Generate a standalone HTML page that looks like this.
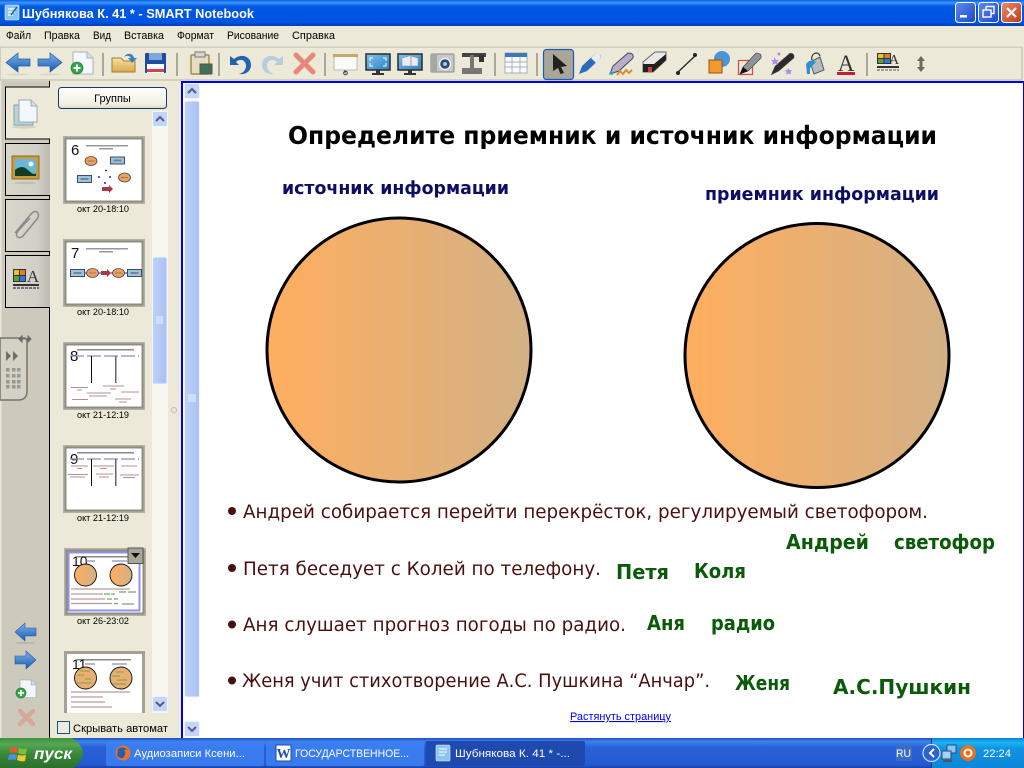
<!DOCTYPE html>
<html><head><meta charset="utf-8"><title>SMART Notebook</title>
<style>
html,body{margin:0;padding:0;width:1024px;height:768px;overflow:hidden;background:#ece9d8}
svg{display:block;position:absolute;left:0;top:0}
.ui{font-family:"Liberation Sans",sans-serif;font-size:11px;fill:#000}
.sl{font-family:"DejaVu Sans",sans-serif}
.dg{font-family:"Liberation Sans",sans-serif;font-size:15px;fill:#111}
.lab{font-family:"Liberation Sans",sans-serif;font-size:9.5px;fill:#000;text-anchor:middle}
.g{fill:#0a5a0a;font-weight:bold;font-size:20px}
.b{fill:#4a1010;font-size:18.5px}
.n{fill:#0d0d66;font-weight:bold;font-size:18px}
</style></head><body>
<svg width="1024" height="768" viewBox="0 0 1024 768" xmlns="http://www.w3.org/2000/svg">
<defs>
<linearGradient id="tb" x1="0" y1="0" x2="0" y2="1"><stop offset="0" stop-color="#0a5ee6"/><stop offset=".1" stop-color="#3d95ff"/><stop offset=".25" stop-color="#0058e0"/><stop offset=".85" stop-color="#0054e3"/><stop offset="1" stop-color="#003fb5"/></linearGradient>
<linearGradient id="orb" x1="0" y1="0" x2="1" y2="0"><stop offset="0" stop-color="#ffae5e"/><stop offset="1" stop-color="#d3b186"/></linearGradient>
<linearGradient id="task" x1="0" y1="0" x2="0" y2="1"><stop offset="0" stop-color="#1f4fc4"/><stop offset=".12" stop-color="#3f83ea"/><stop offset=".3" stop-color="#2a62d8"/><stop offset=".9" stop-color="#2459d2"/><stop offset="1" stop-color="#1941a5"/></linearGradient>
<linearGradient id="tray" x1="0" y1="0" x2="0" y2="1"><stop offset="0" stop-color="#0f7fd8"/><stop offset=".15" stop-color="#19b5f0"/><stop offset=".35" stop-color="#0f93e4"/><stop offset="1" stop-color="#0e86da"/></linearGradient>
<linearGradient id="start" x1="0" y1="0" x2="0" y2="1"><stop offset="0" stop-color="#3f8f3f"/><stop offset=".2" stop-color="#55a855"/><stop offset=".5" stop-color="#398a39"/><stop offset="1" stop-color="#2c6f2c"/></linearGradient>
<linearGradient id="scr" x1="0" y1="0" x2="1" y2="0"><stop offset="0" stop-color="#bed1f8"/><stop offset="1" stop-color="#a9c0f2"/></linearGradient>
<linearGradient id="tabg" x1="0" y1="0" x2="1" y2="0"><stop offset="0" stop-color="#d9d7cc"/><stop offset=".7" stop-color="#d2d0c6"/><stop offset="1" stop-color="#bdbbb2"/></linearGradient>
<linearGradient id="btn" x1="0" y1="0" x2="0" y2="1"><stop offset="0" stop-color="#fff"/><stop offset=".8" stop-color="#f0eee2"/><stop offset="1" stop-color="#dcd8c4"/></linearGradient>
<linearGradient id="blA" x1="0" y1="0" x2="0" y2="1"><stop offset="0" stop-color="#7fb2e8"/><stop offset="1" stop-color="#1a5cb0"/></linearGradient>
<linearGradient id="winb" x1="0" y1="0" x2="1" y2="1"><stop offset="0" stop-color="#5c8cf0"/><stop offset="1" stop-color="#1c46c8"/></linearGradient>
<linearGradient id="winr" x1="0" y1="0" x2="1" y2="1"><stop offset="0" stop-color="#e88a6c"/><stop offset="1" stop-color="#c23a18"/></linearGradient>
<linearGradient id="fold" x1="0" y1="0" x2="0" y2="1"><stop offset="0" stop-color="#f8e0a0"/><stop offset="1" stop-color="#d8a850"/></linearGradient>
<linearGradient id="mon" x1="0" y1="0" x2="1" y2="1"><stop offset="0" stop-color="#7fc4ee"/><stop offset="1" stop-color="#2a80c0"/></linearGradient>
<g id="arrR"><path d="M0 6 H12 V0 L24 9.500 L12 19 V13 H0 Z" fill="url(#blA)" stroke="#1f5aa8" stroke-width=".7"/><ellipse cx="12" cy="21.500" rx="11" ry="1" fill="#dbd8c9"/></g>
<g id="scUp"><rect width="15" height="15" rx="1.500" fill="#c5d6fa" stroke="#f2f5fe"/><path d="M3.500 9.500 L7.500 5.500 L11.500 9.500" fill="none" stroke="#4d6185" stroke-width="2"/></g>
<g id="scDn"><rect width="15" height="15" rx="1.500" fill="#c5d6fa" stroke="#f2f5fe"/><path d="M3.500 5.500 L7.500 9.500 L11.500 5.500" fill="none" stroke="#4d6185" stroke-width="2"/></g>
<g id="sep"><rect width="2" height="23" fill="#aaa89c"/></g>
<g id="page"><path d="M0 0 H14 L20 6 V22 H0Z" fill="#f4f8fd" stroke="#a6b4bf"/><path d="M14 0 V6 H20" fill="#d6dfe8" stroke="#a6b4bf"/></g>
<g id="plus"><circle r="6" fill="#33a64a" stroke="#17752c" stroke-width=".6"/><path d="M-3.500 0 H3.500 M0 -3.500 V3.500" stroke="#fff" stroke-width="2"/></g>
<g id="thX"><path d="M2 2 L19 19 M19 2 L2 19" stroke="#e88878" stroke-width="5" stroke-linecap="round"/></g>
<g id="fr"><rect width="82" height="68" fill="#b4b2a6"/><rect x="1.500" y="1.500" width="79" height="65" fill="#8f8d82"/><rect x="3.500" y="3.500" width="75" height="61" fill="#fff"/></g>
<g id="ob"><rect width="14" height="7" fill="#9cc4d8" stroke="#3c4c64"/><rect x="3" y="2.500" width="8" height="2" fill="#6f86a4"/></g>
<g id="oc"><ellipse rx="6" ry="4.500" fill="#ec9f5e" stroke="#444" stroke-width=".8"/><rect x="-3.500" y="-.5" width="7" height="1" fill="#9c7a5c"/></g>
</defs>

<rect width="1024" height="768" fill="#ece9d8"/>
<!-- title bar -->
<rect width="1024" height="26" fill="url(#tb)"/>
<rect x="5" y="5" width="14" height="15" rx="1.500" fill="#8fc4ea" stroke="#e4f2fb" stroke-width=".6"/>
<path d="M8 9 H15 M8 12 H15 M8 15 H13" stroke="#fff" stroke-width="1.200"/><path d="M11 15 L17 7" stroke="#1a5fa8" stroke-width="1.500"/>
<text x="22" y="18" class="ui" style="font-size:13px;font-weight:bold;fill:#fff" textLength="232" lengthAdjust="spacingAndGlyphs">Шубнякова К. 41 * - SMART Notebook</text>
<rect x="955.500" y="2.500" width="20" height="20" rx="3" fill="url(#winb)" stroke="#fff"/><rect x="960" y="15" width="7" height="2.500" fill="#fff"/>
<rect x="978.500" y="2.500" width="20" height="20" rx="3" fill="url(#winb)" stroke="#fff"/>
<path d="M986 6.500 h8 v7 h-2.500 M986 6.500 v3" fill="none" stroke="#fff" stroke-width="1.400"/><rect x="983" y="10" width="8" height="7" fill="none" stroke="#fff" stroke-width="1.400"/>
<rect x="1001.500" y="2.500" width="20" height="20" rx="3" fill="url(#winr)" stroke="#fff"/><path d="M1007 8 L1016 17 M1016 8 L1007 17" stroke="#fff" stroke-width="2.200"/>

<!-- menu -->
<g class="ui">
<text x="6" y="39" textLength="25" lengthAdjust="spacingAndGlyphs">Файл</text>
<text x="44" y="39" textLength="36" lengthAdjust="spacingAndGlyphs">Правка</text>
<text x="93" y="39" textLength="18" lengthAdjust="spacingAndGlyphs">Вид</text>
<text x="124" y="39" textLength="40" lengthAdjust="spacingAndGlyphs">Вставка</text>
<text x="177" y="39" textLength="37" lengthAdjust="spacingAndGlyphs">Формат</text>
<text x="227" y="39" textLength="52" lengthAdjust="spacingAndGlyphs">Рисование</text>
<text x="292" y="39" textLength="43" lengthAdjust="spacingAndGlyphs">Справка</text>
</g>
<!-- toolbar -->
<rect x="0" y="46" width="1023" height="1" fill="#fff"/>
<rect x="0" y="47" width="1022" height="33" fill="#ece9d8" stroke="#b8b6a8"/>
<use href="#arrR" transform="translate(30,53) scale(-1,1)"/>
<use href="#arrR" transform="translate(38,53)"/>
<use href="#page" transform="translate(73,52)"/><use href="#plus" transform="translate(77,68)"/>
<use href="#sep" transform="translate(102,53)"/>
<path d="M112 58 H121 L124 61 H135 V72 H112Z" fill="url(#fold)" stroke="#a67c2c"/><path d="M124 57 C127 52 133 53 134 58 L137 58 L132 63 L128 58 H131 C130 56 127 55 124 57Z" fill="#3a7fc0"/>
<rect x="145" y="53" width="21" height="20" rx="1" fill="#1f4f9c"/><rect x="149" y="53" width="13" height="7" fill="#7ca8da"/><rect x="147" y="64" width="17" height="9" fill="#fff"/><rect x="147" y="69" width="17" height="3" fill="#d8404a"/>
<use href="#sep" transform="translate(176,53)"/>
<rect x="191" y="55" width="18" height="19" rx="1" fill="#e8dcc0" stroke="#a88a50" stroke-width="1.500"/><rect x="195" y="52" width="10" height="5" fill="#d8d8d0" stroke="#777"/><rect x="200" y="64" width="12" height="10" fill="#3f6f58" stroke="#555"/>
<use href="#sep" transform="translate(218,53)"/>
<path d="M230 56 V65 H239 L236 62 C240 58 246 60 246 66 C246 70 243 73 239 74 C246 75 251 71 251 65 C251 56 241 53 234 59 Z" fill="#2264b0"/>
<path d="M283 56 V65 H274 L277 62 C273 58 267 60 267 66 C267 70 270 73 274 74 C267 75 262 71 262 65 C262 56 272 53 279 59 Z" fill="#b6cfe0"/>
<use href="#thX" transform="translate(294,53)"/>
<use href="#sep" transform="translate(324,53)"/>
<rect x="334" y="55" width="23" height="15" fill="#fafaf6" stroke="#bbb"/><rect x="333" y="54" width="25" height="3" fill="#c8a868"/><path d="M345 70 V73" stroke="#555"/><circle cx="345.500" cy="73" r="1.800" fill="none" stroke="#333"/>
<rect x="366" y="54" width="24" height="16" fill="url(#mon)" stroke="#2a2a2a" stroke-width="1.500"/><path d="M376 70 h4 v3 h4 v2 h-12 v-2 h4z" fill="#333"/><path d="M370 61 V58 H373 M383 58 H386 V61 M370 63 V66 H373 M386 63 V66 H383" fill="none" stroke="#fff"/>
<rect x="398" y="54" width="24" height="16" fill="url(#mon)" stroke="#2a2a2a" stroke-width="1.500"/><path d="M408 70 h4 v3 h4 v2 h-12 v-2 h4z" fill="#333"/><path d="M402 66 V58 L409 56 H411 V66Z M418 66 V58 L411 56 V66Z" fill="#e8eef4" stroke="#888" stroke-width=".5"/>
<rect x="431" y="54" width="23" height="18" rx="1" fill="#c8c8c8" stroke="#888"/><rect x="431" y="54" width="6" height="18" fill="#a6a6a6"/><circle cx="445" cy="64" r="5.500" fill="#2c4a70" stroke="#eee" stroke-width="1.500"/><circle cx="445" cy="64" r="2" fill="#9ccbe8"/>
<rect x="462" y="53" width="24" height="4" fill="#444"/><rect x="470" y="55" width="4" height="13" fill="#777"/><rect x="479" y="55" width="5" height="7" fill="#333"/><rect x="462" y="68" width="20" height="6" fill="#777"/>
<use href="#sep" transform="translate(494,53)"/>
<rect x="505" y="53" width="22" height="20" fill="#fafbfd" stroke="#a8b0b8"/><rect x="505" y="53" width="22" height="4" fill="#3a78b8"/><path d="M505 62 H527 M505 67 H527 M512 57 V73 M520 57 V73" stroke="#a8b0b8"/>
<use href="#sep" transform="translate(536,53)"/>
<rect x="543.500" y="49.500" width="30" height="30" rx="3" fill="#a9a698" stroke="#1a5ab8" stroke-width="1.200"/>
<path d="M553 54 L567 66 L561 67 L564 73 L560.500 74 L558 68 L553 71Z" fill="#222"/>
<path d="M579 74 L582 66 L596 53 Q601 53 601 58 L587 71Z" fill="#2b6cb8"/><path d="M591 58 L596 63 L601 58 Q600 52 596 53Z" fill="#e6ecf2"/>
<path d="M610 74 L613 66 L628 53 Q634 53 633 58 L619 71Z" fill="#b8aecc" stroke="#3c4a58"/><path d="M617 75 l3 -4 3 3 3 -4 3 3 3 -3" fill="none" stroke="#d89030" stroke-width="2"/><path d="M610 72 l3 2" stroke="#2b9cc0" stroke-width="3"/>
<path d="M643 62 L655 52 H666 V60 L653 72 H643Z" fill="#e8e8e8" stroke="#666"/><path d="M643 64 H654 L666 54 V60 L653 72 H643Z" fill="#222"/><rect x="648" y="67" width="4" height="5" fill="#c84040"/>
<path d="M677 73 L696 55" stroke="#222" stroke-width="1.300"/><circle cx="695" cy="55" r="2" fill="#222"/><circle cx="678" cy="73" r="2" fill="#222"/>
<circle cx="722" cy="59" r="8" fill="#4c94d8"/><rect x="709" y="60" width="13" height="13" fill="#f49a2c" stroke="#99501a"/>
<rect x="738.500" y="60.500" width="14" height="14" fill="none" stroke="#d04848" stroke-width="1.200"/><path d="M740 74 L743 67 L756 53 Q762 53 761 58 L748 71Z" fill="#8f949a" stroke="#333" stroke-width=".6"/><path d="M740 74 L743 67 L748 71Z" fill="#111"/>
<path d="M771 75 L775 66 L790 53 Q795 53 794 58 L779 71Z" fill="#2c2c2c" stroke="#777" stroke-width=".5"/><path d="M774 57 l2 3 3 0 -2 2 1 3 -3-1.500 -3 1.500 1-3 -2-2 3 0Z" fill="#b08ae8"/><path d="M788 68 l1.500 2 2.500 0 -1.500 2 .5 2.500 -2.500-1 -2.500 1 .5-2.500 -1.500-2 2.500 0Z" fill="#b08ae8"/><circle cx="779" cy="54" r="1.500" fill="#b08ae8"/>
<path d="M810 62 L820 57 L824 70 L814 74Z" fill="#b8bcc0" stroke="#555"/><path d="M812 60 C810 54 818 50 820 56" fill="none" stroke="#333" stroke-width="1.200"/><path d="M806 64 Q811 58 816 62 L810 68 V74 H807Z" fill="#2c8ed8"/>
<text x="846" y="71" text-anchor="middle" style="font-family:'Liberation Serif',serif;font-size:23px;fill:#333">A</text><rect x="837" y="72" width="18" height="3" fill="#c02030"/>
<use href="#sep" transform="translate(866,53)"/>
<rect x="877" y="53" width="14" height="11" fill="#333"/><rect x="878" y="54" width="5.500" height="4" fill="#e8c030"/><rect x="884.500" y="54" width="5.500" height="4" fill="#e87c20"/><rect x="878" y="59" width="5.500" height="4" fill="#58a040"/><rect x="884.500" y="59" width="5.500" height="4" fill="#2a7cd0"/>
<text x="894" y="64" text-anchor="middle" style="font-family:'Liberation Serif',serif;font-size:14px;fill:#333">A</text>
<rect x="877" y="66" width="22" height="2" fill="#333"/><path d="M877 70 H899" stroke="#555" stroke-dasharray="3 1"/>
<path d="M921 56 L925 61 H922.500 V67 H925 L921 72 L917 67 H919.500 V61 H917Z" fill="#6c6c64"/>

<!-- left tab column -->
<rect x="0" y="81" width="49" height="657" fill="#cdcabb"/>
<rect x="0" y="81" width="1.500" height="657" fill="#e8e6da"/>
<rect x="49" y="81" width="1" height="6" fill="#000"/><rect x="49" y="139" width="1" height="599" fill="#000"/>
<path d="M50 87 H5.500 V139 H50" fill="#ece9d8" stroke="#000"/>
<path d="M50 143.500 H5.500 V195.500 H50" fill="url(#tabg)" stroke="#000"/>
<path d="M50 199.500 H5.500 V251.500 H50" fill="url(#tabg)" stroke="#000"/>
<path d="M50 255.500 H5.500 V307.500 H50" fill="url(#tabg)" stroke="#000"/>
<rect x="14" y="105" width="19" height="20" fill="#b8d4d8" stroke="#8aa4a8"/><path d="M19 100 H31 L37 106 V122 H19Z" fill="#f2f7fb" stroke="#9aa8b0"/><path d="M31 100 V106 H37" fill="#d4dee6" stroke="#9aa8b0"/><ellipse cx="24" cy="127" rx="12" ry="1.500" fill="#d4d2c4"/>
<rect x="12" y="156" width="27" height="23" fill="#c89c3c" stroke="#8c6c20"/><rect x="15" y="159" width="21" height="17" fill="#6cb4d8"/><path d="M15 170 Q22 164 28 170 T36 173 V176 H15Z" fill="#123c24"/><circle cx="31" cy="164" r="2.500" fill="#e8f4f8"/><ellipse cx="25" cy="183" rx="11" ry="1.300" fill="#c0beb4"/>
<path d="M15 233 L31 214 C36 208 41 214 37 219 L23 236 C19 240 14 236 18 231 L30 218" fill="none" stroke="#8a8a84" stroke-width="1.500"/>
<rect x="13" y="269" width="13" height="13" fill="#333"/><rect x="14" y="270" width="5" height="5" fill="#e8c030"/><rect x="20" y="270" width="5" height="5" fill="#e87c20"/><rect x="14" y="276" width="5" height="5" fill="#58a040"/><rect x="20" y="276" width="5" height="5" fill="#2a7cd0"/>
<text x="33" y="282" text-anchor="middle" style="font-family:'Liberation Serif',serif;font-size:17px;fill:#333">A</text>
<rect x="13" y="284" width="26" height="2" fill="#333"/><path d="M13 288 H39" stroke="#555" stroke-dasharray="3 1" stroke-width="1.500"/>
<path d="M0 338 H24 Q27 338 27 341 V391 Q27 400 18 400 H0Z" fill="#d4d2c6" stroke="#77756c" stroke-width="1.500"/>
<path d="M6 351 L11 356 L6 361Z M13 351 L18 356 L13 361Z" fill="#6e6e66"/>
<g fill="#989890"><rect x="6" y="368" width="3.500" height="3.500"/><rect x="12" y="368" width="3.500" height="3.500"/><rect x="17" y="368" width="3.500" height="3.500"/><rect x="6" y="374" width="3.500" height="3.500"/><rect x="12" y="374" width="3.500" height="3.500"/><rect x="17" y="374" width="3.500" height="3.500"/><rect x="6" y="380" width="3.500" height="3.500"/><rect x="12" y="380" width="3.500" height="3.500"/><rect x="17" y="380" width="3.500" height="3.500"/><rect x="6" y="385" width="3.500" height="3.500"/><rect x="12" y="385" width="3.500" height="3.500"/><rect x="17" y="385" width="3.500" height="3.500"/></g>
<path d="M19 339 H31 M19 339 l3 -3 v6z M31 339 l-3 -3 v6z" stroke="#666" fill="#666"/>
<!-- bottom nav -->
<path d="M36 628 H25 V623 L15 632 L25 641 V636 H36Z" fill="url(#blA)" stroke="#1f5aa8" stroke-width=".6"/><ellipse cx="25" cy="643" rx="10" ry="1" fill="#b8b6a8"/>
<path d="M15 656 H26 V651 L36 660 L26 669 V664 H15Z" fill="url(#blA)" stroke="#1f5aa8" stroke-width=".6"/>
<use href="#page" transform="translate(20,680) scale(.8)"/><use href="#plus" transform="translate(21,693) scale(.85)"/>
<path d="M20 711 L33 724 M33 711 L20 724" stroke="#d6a898" stroke-width="4.500" stroke-linecap="round"/>

<!-- panel -->
<rect x="50" y="81" width="131" height="657" fill="#ece9d8"/>
<rect x="58.500" y="87.500" width="108" height="21" rx="3" fill="url(#btn)" stroke="#0f3c68"/>
<text x="112.500" y="102" class="ui" text-anchor="middle">Группы</text>
<rect x="152" y="111" width="16" height="602" fill="#f8f7f2"/>
<use href="#scUp" transform="translate(152.500,111.500)"/>
<rect x="152.500" y="257" width="14.500" height="127" rx="1.500" fill="url(#scr)" stroke="#f2f5fe"/>
<path d="M156 317 H163 M156 319 H163 M156 321 H163 M156 323 H163" stroke="#f0f4ff"/>
<use href="#scDn" transform="translate(152.500,696.500)"/>
<circle cx="174" cy="410" r="2.500" fill="none" stroke="#bbb"/>

<!-- thumbs -->
<use href="#fr" transform="translate(63,136)"/>
<text x="71" y="155" class="dg">6</text>
<rect x="86" y="145" width="42" height="1.500" fill="#999"/><rect x="99" y="148" width="14" height="1.500" fill="#999"/>
<use href="#oc" transform="translate(91,161)"/><use href="#ob" transform="translate(110.500,157)"/><use href="#ob" transform="translate(77.500,175.500)"/><use href="#oc" transform="translate(124.500,177.500)"/>
<path d="M105 170.500 h2 M98 177 h2 M109 177 h2 M104 183 h2" stroke="#2424e0" stroke-width="1.500"/><path d="M102 187 h7 v-2 l4 4 -4 4 v-2 h-7z" fill="#a83848"/>
<text x="103" y="212" class="lab" textLength="52" lengthAdjust="spacingAndGlyphs">окт 20-18:10</text>

<use href="#fr" transform="translate(63,239)"/>
<text x="71" y="258" class="dg">7</text>
<rect x="86" y="248" width="42" height="1.500" fill="#999"/><rect x="99" y="251" width="14" height="1.500" fill="#999"/>
<path d="M72 273 H138" stroke="#2020d0"/>
<use href="#ob" transform="translate(70.500,269.500)"/><use href="#oc" transform="translate(92.500,273)"/><path d="M101 271 h6 v-2 l4 4 -4 4 v-2 h-6z" fill="#a83848"/><use href="#oc" transform="translate(118.500,273)"/><use href="#ob" transform="translate(127.500,269.500)"/>
<text x="103" y="315" class="lab" textLength="52" lengthAdjust="spacingAndGlyphs">окт 20-18:10</text>

<use href="#fr" transform="translate(63,342)"/>
<text x="70" y="361" class="dg">8</text>
<rect x="77" y="349" width="57" height="1.500" fill="#888"/>
<path d="M70 356 H139" stroke="#8c8cc0" stroke-dasharray="14 3" stroke-width="1.200"/>
<rect x="91" y="356" width="1" height="27" fill="#111"/><rect x="115" y="356" width="1.500" height="27" fill="#666"/>
<g stroke="#b09090"><path d="M71 387.500 H88 M77 390 H82 M103 386 H124 M110 389 H116 M121 392 H139 M87 393 H111 M89 396 H107 M72 399.500 H88 M115 399 H131 M119 402 H127"/></g>
<text x="103" y="418" class="lab" textLength="52" lengthAdjust="spacingAndGlyphs">окт 21-12:19</text>

<use href="#fr" transform="translate(63,445)"/>
<text x="70" y="464" class="dg">9</text>
<rect x="77" y="452" width="57" height="1.500" fill="#888"/>
<path d="M70 459 H139" stroke="#8c8cc0" stroke-dasharray="14 3" stroke-width="1.200"/>
<rect x="91" y="459" width="1" height="27" fill="#111"/><rect x="115" y="459" width="1.500" height="27" fill="#666"/>
<g stroke="#b09090"><path d="M71 466 H88 M77 468.500 H82 M93 466 H114 M100 468.500 H107 M121 466 H137 M68 474.500 H88 M70 477 H85 M96 474 H113 M99 477 H109 M120 475 H139 M123 477.500 H135"/></g>
<text x="103" y="521" class="lab" textLength="52" lengthAdjust="spacingAndGlyphs">окт 21-12:19</text>

<use href="#fr" transform="translate(64,548)"/>
<rect x="68.500" y="552.500" width="71" height="58" fill="none" stroke="#9090f0" stroke-width="2"/>
<rect x="77" y="556" width="54" height="1.500" fill="#888"/>
<text x="72" y="566" class="dg" style="font-size:14px">10</text>
<path d="M85 561 H95 M112 561 H127" stroke="#8c8cc0" stroke-width="1.200"/>
<circle cx="85.500" cy="575" r="11" fill="url(#orb)" stroke="#111" stroke-width=".9"/><circle cx="121" cy="575" r="11" fill="url(#orb)" stroke="#111" stroke-width=".9"/>
<g stroke="#b89c9c" stroke-width="1.200"><path d="M71 589 H130 M71 594 H103 M71 599 H105 M71 603.500 H112"/></g>
<g stroke="#6cac6c" stroke-width="1.200"><path d="M104 594 H110 M111 594 H115 M119 592 H126 M128 592 H136 M107 599 H112 M114 599 H118 M114 603.500 H118 M122 604 H134"/></g>
<rect x="128" y="548" width="15" height="15.500" fill="#a8a698" stroke="#555"/><path d="M131 553 H140 L135.500 558Z" fill="#111"/>
<text x="103" y="624" class="lab" textLength="52" lengthAdjust="spacingAndGlyphs">окт 26-23:02</text>

<rect x="64" y="651" width="81" height="62" fill="#a4a296"/><rect x="67" y="654" width="75" height="59" fill="#fff"/>
<rect x="77" y="659" width="54" height="1.500" fill="#888"/>
<text x="72" y="669" class="dg" style="font-size:14px">11</text>
<path d="M85 664 H95 M112 664 H127" stroke="#8c8cc0" stroke-width="1.200"/>
<circle cx="85.500" cy="678" r="11" fill="#e8b070" stroke="#111" stroke-width=".9"/><circle cx="121" cy="678" r="11" fill="#e8b070" stroke="#111" stroke-width=".9"/>
<g stroke="#8c9a4c" stroke-width="1"><path d="M80 671 H90 M78 675 H84 M85 679 H91 M76 683 H92 M116 672 H124 M112 676 H120 M117 680 H127 M113 684 H126"/></g>
<g stroke="#b89c9c" stroke-width="1.200"><path d="M71 692 H130 M71 697 H103 M71 702 H105 M71 707 H112"/></g>
<rect x="57.500" y="721.500" width="12" height="12" fill="#ecebe2" stroke="#1c5180"/>
<text x="73" y="732" class="ui" textLength="95" lengthAdjust="spacingAndGlyphs">Скрывать автомат</text>

<!-- page area -->
<rect x="181" y="81" width="843" height="657" fill="#0000e0"/>
<rect x="183" y="83" width="840" height="655" fill="#fff"/>
<use href="#scUp" transform="translate(184.500,83.500)"/>
<rect x="184.500" y="101" width="15" height="596" rx="1.500" fill="url(#scr)" stroke="#f2f5fe"/>
<path d="M188 395 H196 M188 397 H196 M188 399 H196 M188 401 H196" stroke="#eef3ff"/>
<use href="#scDn" transform="translate(184.500,721.500)"/>

<!-- slide -->
<g class="sl">
<text x="288" y="144" fill="#000" font-weight="bold" font-size="25px" textLength="649" lengthAdjust="spacingAndGlyphs">Определите приемник и источник информации</text>
<text x="282" y="194" class="n" textLength="227" lengthAdjust="spacingAndGlyphs">источник информации</text>
<text x="705" y="200" class="n" textLength="234" lengthAdjust="spacingAndGlyphs">приемник информации</text>
<text x="243" y="518" class="b" textLength="685" lengthAdjust="spacingAndGlyphs">Андрей собирается перейти перекрёсток, регулируемый светофором.</text>
<text x="243" y="575" class="b" textLength="358" lengthAdjust="spacingAndGlyphs">Петя беседует с Колей по телефону.</text>
<text x="243" y="631" class="b" textLength="383" lengthAdjust="spacingAndGlyphs">Аня слушает прогноз погоды по радио.</text>
<text x="242" y="687" class="b" textLength="468" lengthAdjust="spacingAndGlyphs">Женя учит стихотворение А.С. Пушкина “Анчар”.</text>
<text x="786" y="549" class="g" textLength="83" lengthAdjust="spacingAndGlyphs">Андрей</text>
<text x="894" y="549" class="g" textLength="101" lengthAdjust="spacingAndGlyphs">светофор</text>
<text x="616" y="579" class="g" textLength="53" lengthAdjust="spacingAndGlyphs">Петя</text>
<text x="694" y="578" class="g" textLength="52" lengthAdjust="spacingAndGlyphs">Коля</text>
<text x="647" y="630" class="g" textLength="38" lengthAdjust="spacingAndGlyphs">Аня</text>
<text x="711" y="630" class="g" textLength="64" lengthAdjust="spacingAndGlyphs">радио</text>
<text x="735" y="690" class="g" textLength="55" lengthAdjust="spacingAndGlyphs">Женя</text>
<text x="833" y="694" class="g" textLength="138" lengthAdjust="spacingAndGlyphs">А.С.Пушкин</text>
</g>
<circle cx="399" cy="350" r="132" fill="url(#orb)" stroke="#000" stroke-width="3"/>
<circle cx="817" cy="355.500" r="132" fill="url(#orb)" stroke="#000" stroke-width="3"/>
<g fill="#4a1010"><circle cx="232" cy="511" r="4"/><circle cx="232" cy="568" r="4"/><circle cx="232" cy="624.500" r="4"/><circle cx="232" cy="680.500" r="4"/></g>
<text x="570" y="720" class="ui" style="fill:#0000f0;text-decoration:underline" textLength="101" lengthAdjust="spacingAndGlyphs">Растянуть страницу</text>

<!-- taskbar -->
<rect x="0" y="738" width="1024" height="30" fill="url(#task)"/>
<path d="M0 738 H72 Q82 744 83 753 Q82 762 74 768 H0Z" fill="url(#start)"/>
<g transform="translate(10,745)"><path d="M0 3 Q4 1 8 3 L7 8 Q3 7 0 8Z" fill="#e8582c"/><path d="M9 3 Q13 5 17 3 L16 9 Q12 10 8 8Z" fill="#7cc040"/><path d="M-1 10 Q3 8 7 10 L6 15 Q2 14 -2 15Z" fill="#4890e8"/><path d="M8 10 Q12 11 16 10 L15 16 Q11 17 7 15Z" fill="#f4c830"/></g>
<text x="34" y="759" style="font-family:'Liberation Sans',sans-serif;font-style:italic;font-weight:bold;font-size:16px;fill:#fff" textLength="38" lengthAdjust="spacingAndGlyphs">пуск</text>
<rect x="106" y="741" width="158" height="25" rx="2" fill="#3c81f3" opacity=".85"/>
<rect x="266" y="741" width="158" height="25" rx="2" fill="#3c81f3" opacity=".85"/>
<rect x="425.500" y="741" width="159.500" height="25" rx="2" fill="#1e4ab0"/>
<circle cx="123" cy="753" r="7.500" fill="#e8742c"/><path d="M118 749 Q124 745 128 751 Q126 749 124 750 Q127 754 123 758 Q119 759 117 755Z" fill="#2c5ca8"/>
<rect x="276" y="745" width="15" height="16" fill="#fff" stroke="#1c4c98"/><text x="283.500" y="758" text-anchor="middle" style="font-family:'Liberation Serif',serif;font-weight:bold;font-size:14px;fill:#1c50b0">W</text>
<rect x="436" y="745" width="14" height="16" rx="1.500" fill="#8fc4ea" stroke="#d8ecf8" stroke-width=".6"/><path d="M439 749 H447 M439 752 H447 M439 755 H445" stroke="#fff"/>
<g class="ui" style="fill:#fff">
<text x="134" y="757" style="fill:#fff" textLength="111" lengthAdjust="spacingAndGlyphs">Аудиозаписи Ксени...</text>
<text x="295" y="757" style="fill:#fff" textLength="114" lengthAdjust="spacingAndGlyphs">ГОСУДАРСТВЕННОЕ...</text>
<text x="455" y="757" style="fill:#fff" textLength="115" lengthAdjust="spacingAndGlyphs">Шубнякова К. 41 * -...</text>
</g>
<rect x="896" y="745" width="16" height="16" fill="#3b6cc4"/>
<text x="896" y="757" class="ui" style="fill:#fff" textLength="15" lengthAdjust="spacingAndGlyphs">RU</text>
<rect x="931" y="738" width="93" height="30" fill="url(#tray)"/>
<rect x="931" y="738" width="1" height="30" fill="#0c3a8c"/>
<circle cx="931.500" cy="753" r="8.500" fill="#2c62d8" stroke="#cfe0fa" stroke-width="1.200"/><path d="M934 749 L930 753 L934 757" fill="none" stroke="#fff" stroke-width="2"/>
<rect x="947" y="745" width="9" height="8" fill="#8fc4f0" stroke="#2c4c80"/><rect x="942" y="751" width="9" height="8" fill="#a8d0f0" stroke="#2c4c80"/><path d="M943 761 H952" stroke="#555" stroke-width="2"/>
<circle cx="968" cy="753" r="8" fill="#e8721c"/><circle cx="968" cy="753" r="3.500" fill="none" stroke="#fff" stroke-width="2"/>
<text x="983" y="757" class="ui" style="fill:#fff" textLength="28" lengthAdjust="spacingAndGlyphs">22:24</text>
</svg>
</body></html>
